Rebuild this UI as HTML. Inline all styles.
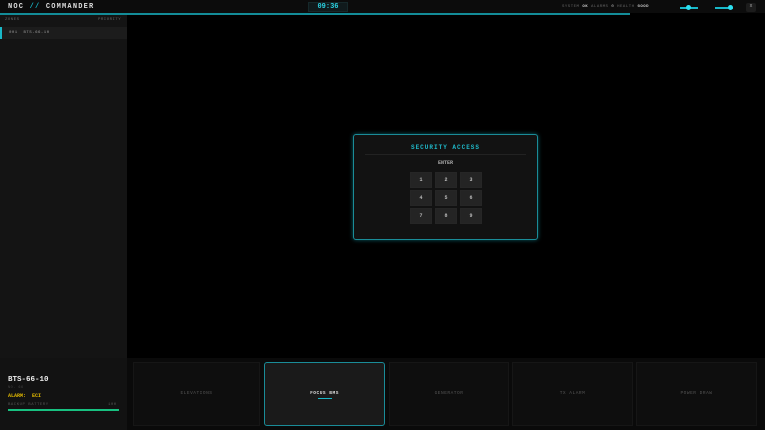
<!DOCTYPE html>
<html><head><style>
*{margin:0;padding:0;box-sizing:border-box}
body{width:765px;height:430px;background:#000;font-family:"Liberation Mono",monospace;overflow:hidden;position:relative;color:#ccc}
.a{position:absolute}
.t{font-size:5px;color:#666;letter-spacing:.5px}
.k{position:absolute;width:22px;height:16px;background:#242424;border:1px solid #262626;color:#bbb;font-size:5px;text-align:center;line-height:14px;font-weight:bold}
.b{position:absolute;top:362px;height:64px;background:#0e0e0e;border:1px solid #161616;text-align:center;font-size:4.5px;color:#555;letter-spacing:.5px;padding-top:28px}
</style></head><body>
<div class="a" style="left:0;top:0;width:765px;height:13px;background:#0c0c0c"></div>
<div class="a" style="left:8px;top:3px;font-size:7px;font-weight:bold;color:#ddd;letter-spacing:1.2px">NOC <span style="color:#19b8c8">//</span> COMMANDER</div>
<div class="a" style="left:308px;top:2px;width:40px;height:10px;background:#101a1c;border:1px solid #16282a;color:#2bd0e0;font-size:7px;font-weight:bold;text-align:center;line-height:8px">09:36</div>
<div class="a t" style="left:562px;top:5px;font-size:4px">SYSTEM <span style="color:#ccc;font-weight:bold">OK</span> ALARMS <span style="color:#ccc">0</span> HEALTH <span style="color:#ccc;font-weight:bold">GOOD</span></div>
<div class="a" style="left:680px;top:7px;width:18px;height:2px;background:#19b8c8"></div>
<div class="a" style="left:686px;top:5px;width:5px;height:5px;border-radius:3px;background:#2de0f0"></div>
<div class="a" style="left:715px;top:7px;width:18px;height:2px;background:#19b8c8"></div>
<div class="a" style="left:728px;top:5px;width:5px;height:5px;border-radius:3px;background:#2de0f0"></div>
<div class="a" style="left:746px;top:3px;width:10px;height:9px;background:#1c1c1c;border-radius:2px;color:#aaa;font-size:5px;text-align:center">x</div>
<div class="a" style="left:0;top:13px;width:630px;height:2px;background:#138c98"></div>
<div class="a" style="left:0;top:15px;width:127px;height:343px;background:#141414"></div>
<div class="a t" style="left:5px;top:18px;font-size:4px">ZONES</div>
<div class="a t" style="left:98px;top:18px;font-size:4px">PRIORITY</div>
<div class="a" style="left:0;top:27px;width:127px;height:12px;background:#1c1c1c"></div>
<div class="a" style="left:0;top:27px;width:2px;height:12px;background:#19b8c8"></div>
<div class="a t" style="left:9px;top:31px;font-size:4px;color:#999">001 &nbsp;BTS-66-10</div>
<div class="a" style="left:353px;top:134px;width:185px;height:106px;background:#121212;border:1px solid #1a8c98;border-radius:3px;box-shadow:0 0 4px #0d5a62"></div>
<div class="a" style="left:353px;top:144px;width:185px;text-align:center;color:#1fb8c8;font-size:6px;font-weight:bold;letter-spacing:1px">SECURITY ACCESS</div>
<div class="a" style="left:365px;top:154px;width:161px;height:1px;background:#222"></div>
<div class="a" style="left:353px;top:160px;width:185px;text-align:center;color:#aaa;font-size:5px;font-weight:bold">ENTER</div>
<div class="k" style="left:410px;top:172px">1</div><div class="k" style="left:435px;top:172px">2</div><div class="k" style="left:460px;top:172px">3</div>
<div class="k" style="left:410px;top:190px">4</div><div class="k" style="left:435px;top:190px">5</div><div class="k" style="left:460px;top:190px">6</div>
<div class="k" style="left:410px;top:208px">7</div><div class="k" style="left:435px;top:208px">8</div><div class="k" style="left:460px;top:208px">9</div>
<div class="a" style="left:0;top:358px;width:765px;height:72px;background:#0a0a0a"></div>
<div class="a" style="left:0;top:358px;width:127px;height:72px;background:#121212"></div>
<div class="a" style="left:8px;top:376px;font-size:7.5px;font-weight:bold;color:#eee">BTS-66-10</div>
<div class="a t" style="left:8px;top:386px;font-size:3.5px;color:#444">NO. 66</div>
<div class="a" style="left:8px;top:393px;font-size:5px;font-weight:bold;color:#e0b800">ALARM: &nbsp;ECI</div>
<div class="a t" style="left:8px;top:403px;font-size:4px;color:#555">BACKUP BATTERY</div>
<div class="a t" style="left:108px;top:403px;font-size:4px;color:#555">100</div>
<div class="a" style="left:8px;top:409px;width:111px;height:2px;background:#18c080"></div>
<div class="b" style="left:133px;width:127px">ELEVATIONS</div>
<div class="b" style="left:264px;width:121px;background:#1a1a1a;border:1px solid #1a8c98;border-radius:3px;color:#ddd;font-weight:bold">FOCUS BMS<div style="margin:2px auto;width:14px;height:1px;background:#19b8c8"></div></div>
<div class="b" style="left:389px;width:120px">GENERATOR</div>
<div class="b" style="left:512px;width:121px">TX ALARM</div>
<div class="b" style="left:636px;width:121px">POWER DRAW</div>
</body></html>
